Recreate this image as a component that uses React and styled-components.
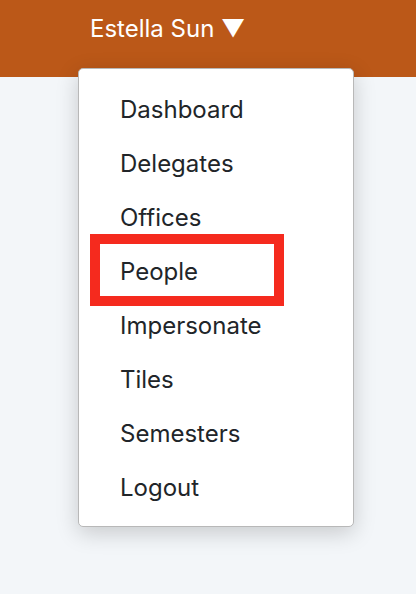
import React from "react";
import styled, { createGlobalStyle } from "styled-components";

const items = [
  "Dashboard",
  "Delegates",
  "Offices",
  "People",
  "Impersonate",
  "Tiles",
  "Semesters",
  "Logout",
];

export default function App() {
  return (
    <>
      <GlobalStyle />
      <Page>
        <Header>
          <UserButton>Estella Sun ▼</UserButton>
        </Header>
        <Menu>
          {items.map((item) => (
            <Item key={item} $highlight={item === "People"}>
              {item}
            </Item>
          ))}
        </Menu>
      </Page>
    </>
  );
}

/* Styled Components */
const GlobalStyle = createGlobalStyle`
  html, body {
    margin: 0;
    padding: 0;
    background: #f3f6f9;
    font-family: Inter, "Noto Sans", sans-serif;
  }
`;

const Page = styled.div`
  position: relative;
  width: 416px;
  height: 594px;
  overflow: hidden;
`;

const Header = styled.header`
  height: 77px;
  background: #bb5818;
  display: flex;
  align-items: flex-start;
  padding-left: 90px;
  box-sizing: border-box;
`;

const UserButton = styled.div`
  color: #ffffff;
  font-size: 24px;
  line-height: 30px;
  margin-top: 14px;
`;

const Menu = styled.ul`
  position: absolute;
  top: 68px;
  left: 78px;
  width: 276px;
  height: 459px;
  box-sizing: border-box;
  margin: 0;
  padding: 14px 0 0;
  list-style: none;
  background: #ffffff;
  border: 1px solid #b8b8b8;
  border-radius: 5px;
  box-shadow: 0 6px 22px rgba(0, 0, 0, 0.18);
`;

const Item = styled.li`
  position: relative;
  height: 54px;
  line-height: 54px;
  padding-left: 41px;
  font-size: 24px;
  color: #212529;

  ${({ $highlight }) =>
    $highlight &&
    `
    &::after {
      content: "";
      position: absolute;
      left: 11px;
      top: -11px;
      width: 194px;
      height: 72px;
      box-sizing: border-box;
      border: 10px solid #f52a1e;
    }
  `}
`;
